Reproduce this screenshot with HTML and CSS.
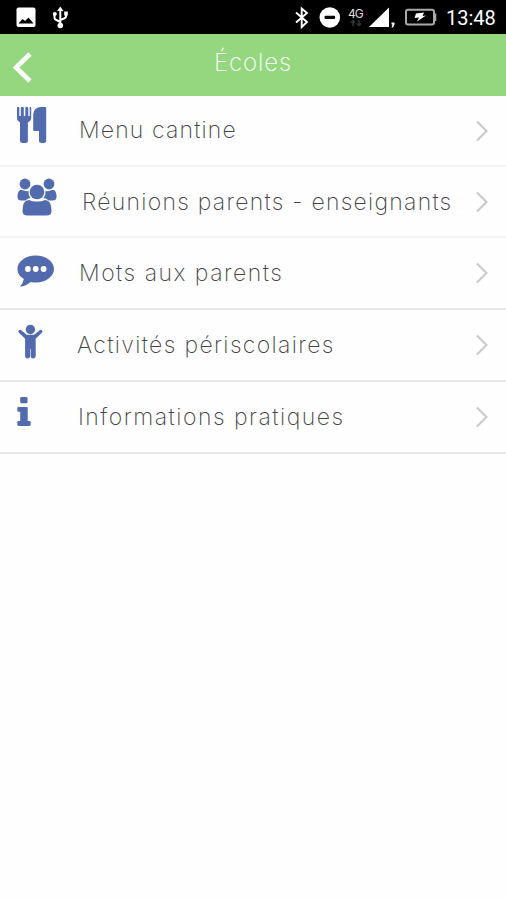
FILE: index.html
```
<!DOCTYPE html>
<html lang="fr">

<head>
    <meta charset="UTF-8">
    <meta name="viewport" content="width=device-width, initial-scale=1.0">
    <title>Écoles</title>
    <link rel="stylesheet" href="styles.css">
</head>

<body>
    <div class="status-bar">
        <svg class="status-left" width="60" height="34" viewBox="12 0 60 34">
            <rect x="16.5" y="7.5" width="19" height="19.500" rx="2" fill="#fff" />
            <path d="M18.500 23.500l4-4.500 2.500 2 3.500-3.500 5 6z" fill="#000" />
            <g fill="none" stroke="#fff" stroke-width="2">
                <path d="M60.300 10v15M54.500 14v3.500q0 2 2 2.500l3.800 2M66 13v3q0 2-2 2.500l-3.700 1.500" />
            </g>
            <path d="M60.300 6.500l3.200 4.500h-6.400z" fill="#fff" />
            <circle cx="60.300" cy="25.500" r="2.800" fill="#fff" />
            <circle cx="54.800" cy="14" r="2" fill="#fff" />
            <rect x="64.200" y="11.500" width="3.600" height="4" fill="#fff" />
        </svg>
        <div class="status-right">
            <svg width="58" height="34" viewBox="290 0 58 34">
                <path d="M296 12.500l11 9.500-5.300 5V8.500l5.300 4.500-11 9.500" fill="none" stroke="#fff" stroke-width="1.900" />
                <circle cx="329.800" cy="17.500" r="10.300" fill="#fff" />
                <rect x="324.500" y="15.800" width="10.600" height="3.200" rx="1" fill="#000" />
            </svg>
            <div class="network">
                <span class="network-type">4G</span>
                <svg width="16" height="8" viewBox="0 0 16 8">
                    <path d="M5 7V2M3 3.500L5 1.500 7 3.500M11 1v5M9 4.500L11 6.500 13 4.500" fill="none" stroke="#333" stroke-width="1.500" />
                </svg>
            </div>
            <svg width="76" height="34" viewBox="365 0 76 34">
                <path d="M369 27L389 7.500V27z" fill="#fff" />
                <path d="M391.500 22.500h3v2l-1.500 3h-1.500l1-3h-1z" fill="#fff" />
                <rect x="406" y="9.800" width="28" height="14.800" rx="2" fill="none" stroke="#aaa" stroke-width="2" />
                <rect x="434.500" y="13.500" width="1.800" height="7.500" fill="#aaa" />
                <path d="M416 13.500l8-1-1.500 3.500 3.500-.5-9 6 2-4-4.500.5z" fill="#fff" />
            </svg>
            <span class="clock">13:48</span>
        </div>
    </div>

    <header class="header">
        <svg class="back" width="24" height="36" viewBox="0 0 24 36">
            <path d="M20 5L6 18.500 20 32" fill="none" stroke="#fff" stroke-width="4.600" />
        </svg>
        <h1>Écoles</h1>
    </header>

    <ul class="menu">
        <li class="menu-item light">
            <svg class="icon" viewBox="0 0 48 56">
                <path d="M5 11.500q1.300-1.500 2.300 0V20h1.500v-8.500q1.500-1.500 3 0V20h1.500v-8.500q1.500-1.500 3 0V20h1.400v-8.500q1-1.500 1.500 0V22q0 3-3.300 4.300V44.500q0 2.500-2.500 2.500h-2.500Q8 47 8 44.500V26.300Q5 25 5 22z" />
                <path d="M28 11h5q1.200 0 1.200 1.200V44.500q0 2.500-2.500 2.500h-2.200Q27 47 27 44.500V35h-4.500q-1.300 0-1.300-1.300V18q.8-6 6.800-7z" />
            </svg>
            <span class="label cantine">Menu cantine</span>
            <svg class="chevron" viewBox="0 0 14 24">
                <path d="M2 2.500L11.500 12 2 21.500" />
            </svg>
        </li>
        <li class="menu-item light">
            <svg class="icon" viewBox="0 0 48 56">
                <circle cx="13" cy="17" r="5.400" />
                <circle cx="37" cy="17" r="5.400" />
                <path d="M10 23q3 1.500 6.500 1Q16 28 18.500 31q-3 0-5 2.500H9.500q-4 0-4-3.500 0-5.500 2.500-7zM40 23q-3 1.500-6.500 1Q34 28 31.500 31q3 0 5 2.500h4q4 0 4-3.500 0-5.500-2.500-7z" />
                <circle cx="25" cy="25" r="7.300" />
                <path d="M17 33q3 1.500 8 1.500T33 33q6.500 0 6.500 11 0 4.500-5 4.500h-19q-5 0-5-4.500Q10.500 33 17 33z" />
            </svg>
            <span class="label reunions">Réunions parents - enseignants</span>
            <svg class="chevron" viewBox="0 0 14 24">
                <path d="M2 2.500L11.500 12 2 21.500" />
            </svg>
        </li>
        <li class="menu-item">
            <svg class="icon" viewBox="0 0 48 56">
                <path d="M23.700 17.500c10.200 0 18.300 6 18.300 13.500s-8.100 13.500-18.300 13.500q-2.700 0-5-.5Q14 48 8 48.700q3-2.700 3.800-7.700Q5.400 37 5.400 31c0-7.500 8.100-13.500 18.300-13.500z" />
                <g class="dots">
                    <circle cx="15.900" cy="31" r="2.900" />
                    <circle cx="23.700" cy="31" r="2.900" />
                    <circle cx="31.600" cy="31" r="2.900" />
                </g>
            </svg>
            <span class="label mots">Mots aux parents</span>
            <svg class="chevron" viewBox="0 0 14 24">
                <path d="M2 2.500L11.500 12 2 21.500" />
            </svg>
        </li>
        <li class="menu-item">
            <svg class="icon" viewBox="0 0 48 56">
                <circle cx="18.400" cy="19.500" r="4.700" />
                <path d="M8.500 19.800l6.200 5h7.400l6.200-5q2.500.2 2 2.500l-6.600 6.500V46.500q-.5 2-2.600 2t-2.400-2V39h-.6v7.500q-.5 2-2.600 2t-2.400-2V28.800L6.500 22.300q-.5-2.300 2-2.500z" />
            </svg>
            <span class="label activites">Activités périscolaires</span>
            <svg class="chevron" viewBox="0 0 14 24">
                <path d="M2 2.500L11.500 12 2 21.500" />
            </svg>
        </li>
        <li class="menu-item">
            <svg class="icon" viewBox="0 0 48 56">
                <rect x="8.200" y="15" width="7.300" height="6.200" rx="1.300" />
                <path d="M6.500 25h8q1.200 0 1.200 1.200V39h1.800q1.200 0 1.200 1.200v2.600q0 1.200-1.200 1.200h-11q-1.200 0-1.200-1.200v-2.600Q5.300 39 6.500 39h1.700v-9.200H6.500q-1.200 0-1.200-1.200v-2.400Q5.300 25 6.500 25z" />
            </svg>
            <span class="label infos">Informations pratiques</span>
            <svg class="chevron" viewBox="0 0 14 24">
                <path d="M2 2.500L11.500 12 2 21.500" />
            </svg>
        </li>
    </ul>
</body>

</html>
```
FILE: styles.css
```
* {
    margin: 0;
    padding: 0;
    box-sizing: border-box;
}

body {
    font-family: Inter, "Liberation Sans", sans-serif;
    background-color: #fefefe;
    min-height: 100vh;
}

.status-bar {
    display: flex;
    justify-content: space-between;
    height: 34px;
    padding: 0 9px 0 12px;
    background-color: #000;
    color: #fff;
}

.status-right {
    display: flex;
}

.network {
    display: flex;
    flex-direction: column;
    width: 17px;
    padding-top: 8px;
}

.network-type {
    font-size: 12px;
    line-height: 11px;
    letter-spacing: -1px;
    color: #ddd;
}

.clock {
    width: 51px;
    margin-left: 5px;
    font-family: Roboto, sans-serif;
    font-size: 20px;
    line-height: 36px;
    white-space: nowrap;
}

.header {
    display: grid;
    grid-template-columns: 24px 1fr 24px;
    height: 62px;
    padding: 0 10px;
    background-color: #94d77f;
    color: #fff;
}

.header h1 {
    font-size: 24px;
    font-weight: 200;
    line-height: 58px;
    letter-spacing: 0.9px;
    text-align: center;
}

.back {
    margin-top: 15px;
}

.menu {
    list-style: none;
}

.menu-item {
    display: flex;
    height: 72px;
    padding: 0 17px 0 12px;
    border-bottom: 2px solid #e8e8e8;
}

.menu-item.light {
    height: 71px;
    border-bottom-color: #f4f4f4;
}

.icon {
    flex: none;
    width: 48px;
    height: 56px;
    fill: #526bae;
}

.dots {
    fill: #fff;
}

.label {
    flex: 1;
    margin-left: 19px;
    color: #444;
    font-size: 23px;
    font-weight: 200;
    line-height: 71px;
    white-space: nowrap;
}

.cantine {
    line-height: 69px;
    letter-spacing: 1.15px;
}

.reunions {
    margin-left: 22px;
    letter-spacing: 1.25px;
}

.mots {
    letter-spacing: 1.5px;
}

.activites {
    margin-left: 17px;
    letter-spacing: 1.35px;
}

.infos {
    margin-left: 18px;
    letter-spacing: 1.5px;
}

.chevron {
    flex: none;
    width: 14px;
    height: 24px;
    margin-top: 23px;
    fill: none;
    stroke: #c8c8c8;
    stroke-width: 2;
}
```
